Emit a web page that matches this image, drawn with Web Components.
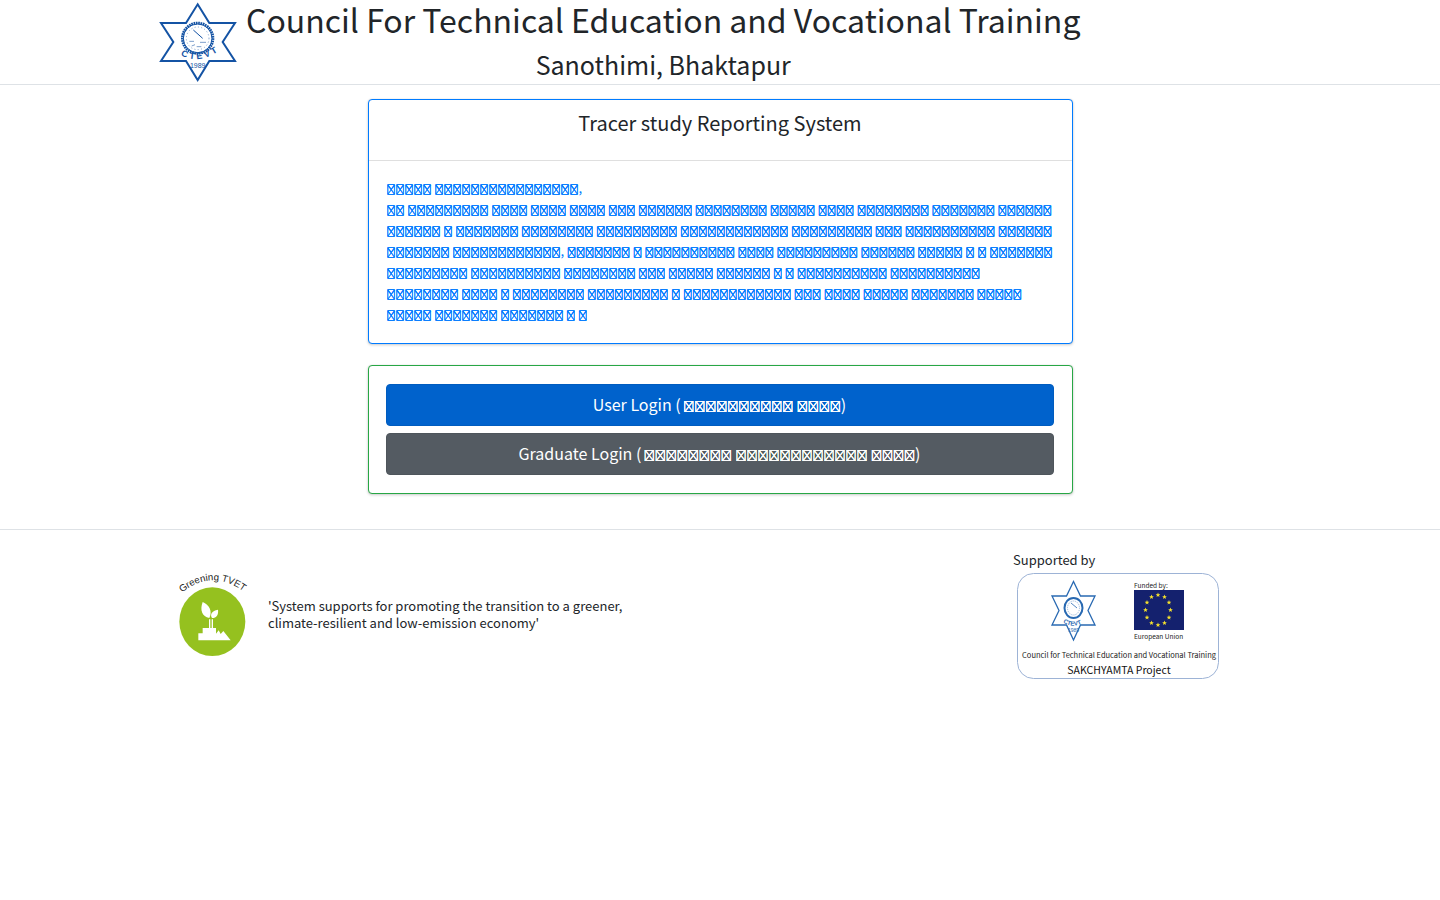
<!DOCTYPE html>
<html lang="en">
<head>
<meta charset="utf-8">
<meta name="viewport" content="width=device-width, initial-scale=1">
<title>Tracer study Reporting System</title>
<style>
  body { margin: 0; background: #fff; color: #212529; font: 13px/21px "Noto Sans CJK JP", "Noto Sans CJK SC", sans-serif; }
</style>
</head>
<body>
<tracer-page></tracer-page>
<script>
const define = (name, html) => {
  const template = document.createElement('template');
  template.innerHTML = html;
  customElements.define(name, class extends HTMLElement {
    constructor() {
      super();
      this.attachShadow({ mode: 'open' }).append(template.content.cloneNode(true));
    }
  });
};

// A word of characters that have no glyph: the font shows its crossed box for each.
const word = n => `<box-word>${'\uE123'.repeat(n)}</box-word>`;
const words = list => list.split(' ').map(n => n.endsWith(',') ? word(parseInt(n)) + ',' : word(+n)).join(' ');

define('box-word', `
  <style>
    :host { display: inline; font-family: "Noto Sans CJK JP", sans-serif; font-size: var(--box, 9px); line-height: 1; white-space: nowrap;
      text-shadow: 0 0 currentColor, 0 0 currentColor, 0 0 currentColor; }
  </style><slot></slot>`);

define('ctevt-logo', `
  <style>
    :host { display: block; width: 80px; flex: none; }
    svg { display: block; width: 100%; height: auto; }
  </style>
  <svg viewBox="24 0 240 252" role="img" aria-label="CTEVT">
    <path d="M143 13 178 69H255L218 126 255 183H178L143 240 108 183H33L70 126 33 69H108Z" fill="#fff" stroke="#1453a4" stroke-width="6"/>
    <circle cx="143" cy="115" r="46" fill="#fff" stroke="#1453a4" stroke-width="8" stroke-dasharray="5 2"/>
    <circle cx="143" cy="115" r="43" fill="none" stroke="#1453a4" stroke-width="3"/>
    <circle cx="143" cy="115" r="34" fill="none" stroke="#7d9fcc" stroke-width="3" stroke-dasharray="3 7"/>
    <path d="M130 90 158 115" stroke="#1453a4" stroke-width="3"/>
    <path d="M118 124h14M150 127h18M125 138l10-4M140 140h14" stroke="#7d9fcc" stroke-width="3"/>
    <path d="M84 154Q143 176 202 150L194 172Q143 198 94 172Z" fill="#fff"/>
    <path id="arc" d="M89 164Q143 196 206 153" fill="none"/>
    <text font-family="Liberation Sans, sans-serif" font-size="27" font-weight="bold" fill="#1453a4"><textPath href="#arc" startOffset="50%" text-anchor="middle">C T E V T</textPath></text>
    <text x="143" y="203" text-anchor="middle" font-family="Liberation Sans, sans-serif" font-size="21" fill="#1453a4">1989</text>
  </svg>`);

define('site-header', `
  <style>
    :host { display: block; border-bottom: 1px solid #dee2e6; }
    .bar { display: flex; gap: 8px; max-width: 1124px; margin: 0 auto; }
    .titles { text-align: center; }
    h1, h2 { margin: 0; font-weight: 400; }
    h1 { font-size: 32px; line-height: 38px; margin-bottom: 10px; }
    h2 { font-size: 25px; line-height: 33px; }
  </style>
  <header class="bar">
    <ctevt-logo></ctevt-logo>
    <div class="titles"><h1><slot name="title"></slot></h1><h2><slot name="place"></slot></h2></div>
  </header>`);

define('notice-card', `
  <style>
    :host { display: block; border: 1px solid #007bff; border-radius: 4px; background: #fff;
      box-shadow: 0 0 1px rgba(0,0,0,.125), 0 1px 3px rgba(0,0,0,.2); }
    h3 { margin: 0; padding: 10px 18px 25px; border-bottom: 1px solid #dfdfdf; font-size: 20px; line-height: 25px; font-weight: 400; text-align: center; }
    p { margin: 0; padding: 16px 18px 19px; color: #007bff; }
  </style>
  <h3><slot name="title"></slot></h3>
  <p><slot></slot></p>`);

define('login-card', `
  <style>
    :host { display: flex; flex-direction: column; gap: 7px; padding: 18px 18px 18px 17px; border: 1px solid #28a745; border-radius: 4px; background: #fff;
      box-shadow: 0 0 1px rgba(0,0,0,.125), 0 1px 3px rgba(0,0,0,.2); }
  </style>
  <slot></slot>`);

define('login-button', `
  <style>
    :host { display: block; --box: 11px; }
    button { display: block; width: 100%; margin: 0; padding: 6px 14px 8px; border: 1px solid var(--edge, #005cbf); border-radius: 4px;
      background: var(--fill, #0062cc); color: #fff; font: inherit; font-size: 16px; line-height: 26px; cursor: pointer; }
  </style>
  <button type="button"><slot></slot></button>`);

define('greening-logo', `
  <style>
    :host { display: block; width: 108px; flex: none; }
    svg { display: block; width: 100%; height: auto; }
  </style>
  <svg viewBox="0 0 324 324" role="img" aria-label="Greening TVET">
    <path id="curve" d="M66 98Q158 24 256 98" fill="none"/>
    <text font-family="Liberation Sans, sans-serif" font-size="29" fill="#222"><textPath href="#curve">Greening TVET</textPath></text>
    <ellipse cx="157" cy="185" rx="99" ry="103" fill="#95c11f"/>
    <g fill="#fff">
      <path d="M128 126C119 151 126 169 148 174 158 153 148 135 128 126Z"/>
      <path d="M174 149C155 153 149 163 156 174 170 174 176 163 174 149Z"/>
      <path d="M147 178h4v26h-4zM155 178h4v26h-4z"/>
      <path d="M115 241V220H128V204H168V221L176 211 182 222 190 213 212 241Z"/>
    </g>
  </svg>`);

define('sponsor-logo', `
  <style>
    :host { display: block; width: 202px; }
    svg { display: block; width: 100%; height: auto; }
  </style>
  <svg viewBox="0 0 202 106" role="img" aria-label="SAKCHYAMTA Project, funded by the European Union">
    <defs><path id="star" d="M0-2.4 .7-.7 2.3-.7 1 .4 1.5 2 0 1-1.5 2-1 .4-2.3-.7-.7-.7Z" fill="#f5e12c"/></defs>
    <rect x=".5" y=".5" width="201" height="105" rx="16" fill="#fff" stroke="#9db3d6"/>
    <g fill="none" stroke="#2869b2">
      <path d="M56.5 8.5 63.5 23H78L71 37.5 78 52H63.5L56.5 67 49.5 52H35L42 37.5 35 23H49.5Z" stroke-width="1.3"/>
      <ellipse cx="56.5" cy="35" rx="9" ry="10" fill="#fff" stroke-width="2"/>
      <ellipse cx="56.5" cy="35" rx="6" ry="7" stroke="#8fb0d8" stroke-dasharray="1 1"/>
      <path d="M54 30 60 35" stroke-width=".8"/>
      <path id="small-arc" d="M46 49Q56.5 57 69 48" stroke="none"/>
    </g>
    <g fill="#2869b2" font-family="Liberation Sans, sans-serif" font-size="6">
      <text font-weight="bold"><textPath href="#small-arc">CTEVT</textPath></text>
      <text x="56.5" y="59" text-anchor="middle" font-size="5">1989</text>
    </g>
    <rect x="117" y="17" width="50" height="40" fill="#14216e"/>
    <g>
      <use href="#star" x="141" y="22"/><use href="#star" x="147.5" y="24"/><use href="#star" x="152" y="29.5"/>
      <use href="#star" x="153.5" y="37"/><use href="#star" x="152" y="44.5"/><use href="#star" x="147.5" y="50"/>
      <use href="#star" x="141" y="52"/><use href="#star" x="134.5" y="50"/><use href="#star" x="130" y="44.5"/>
      <use href="#star" x="128.5" y="37"/><use href="#star" x="130" y="29.5"/><use href="#star" x="134.5" y="24"/>
    </g>
    <g fill="#222" font-family="Noto Sans CJK JP, sans-serif">
      <text x="117" y="15" font-size="6.5">Funded by:</text>
      <text x="117" y="66" font-size="6.5">European Union</text>
      <text x="102" y="85" font-size="7.5" text-anchor="middle">Council for Technical Education and Vocational Training</text>
      <text x="102" y="101" font-size="10.5" text-anchor="middle" fill="#111">SAKCHYAMTA Project</text>
    </g>
  </svg>`);

define('site-footer', `
  <style>
    :host { display: block; border-top: 1px solid #dee2e6; }
    .row { display: flex; justify-content: space-between; max-width: 1120px; margin: 0 auto; padding-top: 21px; line-height: 17px; font-size: 13px; }
    .green { display: flex; align-items: flex-start; padding-top: 9px; }
    .green p { margin: 0; max-width: 370px; padding-top: 37px; }
    .support { width: 267px; }
    .support p { margin: 0; padding-bottom: 5px; }
    sponsor-logo { margin-left: 4px; }
  </style>
  <footer class="row">
    <div class="green"><greening-logo></greening-logo><p><slot name="motto"></slot></p></div>
    <div class="support"><p><slot name="support"></slot></p><sponsor-logo></sponsor-logo></div>
  </footer>`);

define('tracer-page', `
  <style>
    :host { display: block; }
    main { display: grid; gap: 21px; max-width: 705px; margin: 0 auto; padding: 14px 0 35px; }
    .grey { --fill: #545b62; --edge: #4e555b; }
  </style>
  <site-header>
    <span slot="title">Council For Technical Education and Vocational Training</span>
    <span slot="place">Sanothimi, Bhaktapur</span>
  </site-header>
  <main>
    <notice-card>
      <span slot="title">Tracer study Reporting System</span>
      ${words('5 16,')}<br>
      ${words('2 9 4 4 4 3 6 8 5 4 8 7 6 6 1 7 8 9 12 9 3 10 6 7 12, 7 1 10 4 9 6 5 1 1 7 9 10 8 3 5 6 1 1 10 10 8 4 1 8 9 1 12 3 4 5 7 5 5 7 7 1 1')}
    </notice-card>
    <login-card>
      <login-button>User Login (${words('10 4')})</login-button>
      <login-button class="grey">Graduate Login (${words('8 12 4')})</login-button>
    </login-card>
  </main>
  <site-footer>
    <span slot="motto">'System supports for promoting the transition to a greener, climate-resilient and low-emission economy'</span>
    <span slot="support">Supported by</span>
  </site-footer>`);
</script>
</body>
</html>
